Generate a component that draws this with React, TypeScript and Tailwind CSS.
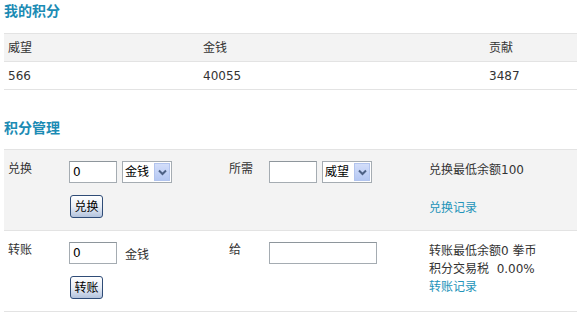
import React from 'react';

const font = { fontFamily: '"DejaVu Sans", "Noto Sans CJK SC", sans-serif' };

function TextInput({ value, w = 'w-[48px]' }: { value?: string; w?: string }) {
  return (
    <div className={`${w} h-[22px] border border-[#a5acb2] border-t-[#8e969c] bg-white pl-[3px] text-[12px] leading-[20px] text-[#000]`}>
      {value}
    </div>
  );
}

function Select({ label }: { label: string }) {
  return (
    <div className="flex h-[22px] w-[50px] items-center border border-[#a5acb2] bg-white pl-[2px] pr-[1px]">
      <span className="flex-1 text-[12px] leading-[18px] text-[#000]">{label}</span>
      <div className="flex h-[18px] w-[16px] items-center justify-center border border-[#b2c4ee] bg-gradient-to-b from-[#d3defa] to-[#b5c8f3]">
        <svg width="9" height="7" viewBox="0 0 9 7">
          <path d="M1 1.5 L4.5 5 L8 1.5" fill="none" stroke="#4d6185" strokeWidth="2" />
        </svg>
      </div>
    </div>
  );
}

function Btn({ label }: { label: string }) {
  return (
    <div className="flex h-[23px] w-[33px] items-center justify-center rounded-[3px] border border-[#2f4c77] bg-gradient-to-b from-[#ffffff] via-[#e9eef6] to-[#b3c3dd] text-[12px] leading-[14px] text-[#000]">
      {label}
    </div>
  );
}

export default function App() {
  return (
    <div className="h-[328px] w-[578px] bg-white text-[12px] text-[#333]" style={font}>
      <div className="h-[33px] pl-[4px] text-[14px] font-bold leading-[22px] text-[#1b8bb4]">我的积分</div>

      <div className="ml-[4px] w-[573px] border-t border-[#e3e3e3]">
        <div className="flex h-[28px] items-center border-b border-[#e3e3e3] bg-[#f3f3f3] leading-[14px]">
          <div className="w-[195px] pl-[4px]">威望</div>
          <div className="w-[286px] pl-[4px]">金钱</div>
          <div className="flex-1 pl-[4px]">贡献</div>
        </div>
        <div className="flex h-[28px] items-center border-b border-[#e3e3e3] leading-[14px]">
          <div className="w-[195px] pl-[4px]">566</div>
          <div className="w-[286px] pl-[4px]">40055</div>
          <div className="flex-1 pl-[4px]">3487</div>
        </div>
      </div>

      <div className="h-[59px] pl-[4px] pt-[27px] text-[14px] font-bold leading-[22px] text-[#1b8bb4]">积分管理</div>

      <div className="ml-[4px] w-[573px] border-t border-[#e3e3e3]">
        <div className="flex h-[81px] border-b border-[#e3e3e3] bg-[#f3f3f3] pt-[11px] leading-[14px]">
          <div className="w-[61px] pl-[4px] pt-[1px]">兑换</div>
          <div className="flex w-[160px] flex-col gap-[12px] pl-[4px]">
            <div className="flex gap-[5px]">
              <TextInput value="0" />
              <Select label="金钱" />
            </div>
            <div className="pl-[1px]">
              <Btn label="兑换" />
            </div>
          </div>
          <div className="w-[40px] pl-[4px] pt-[1px]">所需</div>
          <div className="flex w-[160px] gap-[5px] pl-[4px]">
            <TextInput />
            <Select label="威望" />
          </div>
          <div className="flex flex-1 flex-col pl-[4px]">
            <div className="pt-[2px] leading-[14px]">兑换最低余额100</div>
            <div className="pt-[24px] leading-[14px] text-[#2394b9]">兑换记录</div>
          </div>
        </div>

        <div className="flex h-[81px] border-b border-[#e3e3e3] pt-[11px] leading-[14px]">
          <div className="w-[61px] pl-[4px] pt-[1px]">转账</div>
          <div className="flex w-[160px] flex-col gap-[12px] pl-[4px]">
            <div className="flex items-center gap-[8px]">
              <TextInput value="0" />
              <span className="pt-[3px] leading-[14px]">金钱</span>
            </div>
            <div className="pl-[1px]">
              <Btn label="转账" />
            </div>
          </div>
          <div className="w-[40px] pl-[4px] pt-[1px]">给</div>
          <div className="w-[160px] pl-[4px]">
            <TextInput w="w-[108px]" />
          </div>
          <div className="flex flex-1 flex-col pl-[4px] leading-[18px]">
            <div>转账最低余额0 拳币</div>
            <div>积分交易税&nbsp; 0.00%</div>
            <div className="text-[#2394b9]">转账记录</div>
          </div>
        </div>
      </div>
    </div>
  );
}
